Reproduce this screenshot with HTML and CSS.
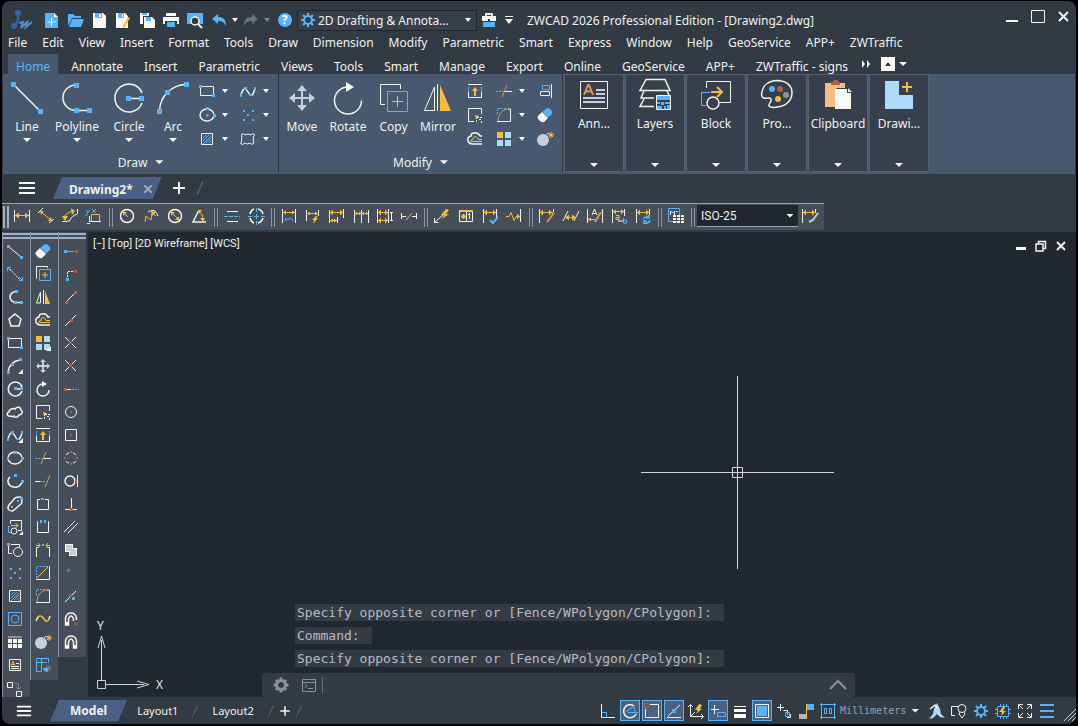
FILE: index.html
```html
<!DOCTYPE html>
<html lang="en">
<head>
  <meta charset="UTF-8">
  <meta name="viewport" content="width=device-width, initial-scale=1.0">
  <title>ZWCAD 2026 Professional Edition - [Drawing2.dwg]</title>
  <link rel="stylesheet" href="styles.css">
</head>
<body>
  <!-- Icon sprite -->
  <svg class="sprite" aria-hidden="true">
    <!-- quick access -->
    <symbol id="logo" viewBox="0 0 24 24"><path class="lg" d="M4 18Q9 14 8 6"/><circle class="lgf" cx="4" cy="18" r="3"/><circle class="lgf" cx="8" cy="5" r="3"/><path class="lg2" d="M9 15l4-1-2 6 7-7-2 6 6-5"/></symbol>
    <symbol id="new" viewBox="0 0 18 18"><path class="bf" d="M3 2h9l4 4v11H3z"/><path class="wf" d="M12 2l4 4h-4z"/><path class="w" d="M9.5 7v8M5.5 11h8"/></symbol>
    <symbol id="open" viewBox="0 0 18 18"><path class="bf" d="M2 3h5l2 2h6v2H6l-4 8z"/><path class="bf" d="M6 8h12l-3 8H3z"/></symbol>
    <symbol id="save" viewBox="0 0 18 18"><path class="wf" d="M3 2h10l3 3v12H3z"/><path class="bf" d="M5 2h7v5H5z"/><path class="wf" d="M9 3h2v3H9z"/></symbol>
    <symbol id="saveas" viewBox="0 0 18 18"><path class="wf" d="M2 2h9l3 3v12H2z"/><path class="bf" d="M4 2h6v5H4z"/><path class="wf" d="M8 3h1v3H8z"/><path class="yf" d="M14 6l2 1-5 9-2 1v-2z"/></symbol>
    <symbol id="saveall" viewBox="0 0 18 18"><path class="wf" d="M2 2h9v3H5v8H2z"/><path class="bf" d="M4 2h5v2H4z"/><path class="wf" d="M6 6h8l3 3v8H6z"/><path class="bf" d="M8 6h5v4H8z"/></symbol>
    <symbol id="print" viewBox="0 0 18 18"><path class="wf" d="M4 2h10v3H4zM1 6h16v7h-2v-3H3v3H1z"/><path class="bf" d="M5 11h8v5H5z"/></symbol>
    <symbol id="preview" viewBox="0 0 18 18"><path class="bf" d="M1 2h16v11H1z"/><circle class="lens" cx="9" cy="10" r="4"/><path class="w w2" d="M12 13l4 4"/></symbol>
    <symbol id="undo" viewBox="0 0 18 18"><path class="bf" d="M2 8l6-5v3c6 0 8 3 8 9-2-4-4-5-8-5v3z"/></symbol>
    <symbol id="redo" viewBox="0 0 18 18"><path class="gf" d="M16 8l-6-5v3c-6 0-8 3-8 9 2-4 4-5 8-5v3z"/></symbol>
    <symbol id="gear" viewBox="0 0 18 18"><circle class="b w2" cx="9" cy="9" r="4"/><path class="b w2" d="M9 2v3M9 13v3M2 9h3M13 9h3M4 4l2 2M12 12l2 2M14 4l-2 2M6 12l-2 2"/></symbol>
    <symbol id="case" viewBox="0 0 18 18"><path class="w w2" d="M6 5V3h6v2"/><path class="wf" d="M2 5h14v5H2z"/><path class="bf" d="M3 11h12v5H3z"/><path class="df" d="M8 8h2v3H8z"/></symbol>
    <symbol id="more" viewBox="0 0 18 18"><path class="wf" d="M5 5h8v1H5zM5 8h8l-4 5z"/></symbol>
    <symbol id="min" viewBox="0 0 18 18"><path class="wf" d="M3 12h12v2H3z"/></symbol>
    <symbol id="max" viewBox="0 0 18 18"><path class="w" d="M2.5 2.500h13v12h-13z"/></symbol>
    <symbol id="close" viewBox="0 0 18 18"><path class="w w2" d="M4 4l9 9M13 4l-9 9"/></symbol>

    <!-- draw -->
    <symbol id="line" viewBox="0 0 18 18"><path class="w" d="M2.5 4.500l13 11"/><path class="bf" d="M1 3h3v3H1zM14 14h3v3h-3z"/></symbol>
    <symbol id="xline" viewBox="0 0 18 18"><path class="w dash" d="M4 4l10 11"/><path class="b" d="M1.500 6V2.500H5M16.500 12v3.500H13M2 3l3 3M16 15l-3-3"/></symbol>
    <symbol id="pline" viewBox="0 0 18 18"><path class="w w15" d="M10 3.500a6 5.500 0 0 0 0 11h5"/><path class="bf" d="M9 2h3v3H9zM8 13h3v3H8zM14 13h3v3h-3z"/></symbol>
    <symbol id="polygon" viewBox="0 0 18 18"><path class="w w15" d="M9 3l6 5-2 7H5L3 8z"/></symbol>
    <symbol id="rect" viewBox="0 0 18 18"><path class="w" d="M2.500 4.500h13v9h-13z"/><path class="bf" d="M1 3h3v3H1zM14 12h3v3h-3z"/></symbol>
    <symbol id="arc" viewBox="0 0 18 18"><path class="w w15" d="M2 15C3 9 7 4 14 3"/><path class="bf" d="M1 14h3v3H1zM5 6h3v3H5zM13 1h3v3h-3z"/></symbol>
    <symbol id="circle" viewBox="0 0 18 18"><path class="w w15" d="M16 7A7 7 0 1 0 16 11M9 9h5"/><path class="bf" d="M8 7h3v3H8zM14 7h3v3h-3z"/></symbol>
    <symbol id="cloud" viewBox="0 0 18 18"><path class="w w15" d="M5 13c-4 1-5-3-2-4 0-3 4-4 6-3 2-3 6-2 6 1 3 2 0 5-2 5-2 3-4 3-5 1-1 1-2 1-3 0z"/></symbol>
    <symbol id="spline" viewBox="0 0 18 18"><path class="w w15" d="M2 13c2-8 5-7 7-3s5 6 7-4"/><path class="bf" d="M1 12h2v3H1zM5 5h3v3H5zM10 12h3v2h-3zM15 5h2v3h-2z"/></symbol>
    <symbol id="ellipse" viewBox="0 0 18 18"><ellipse class="w w15" cx="9" cy="9" rx="7" ry="6"/><path class="bf" d="M8 2h3v3H8zM15 8h3v3h-3zM1 8h2v3H1z"/></symbol>
    <symbol id="ellipsec" viewBox="0 0 18 18"><ellipse class="w w15" cx="9" cy="9" rx="7" ry="6"/><path class="bf" d="M8 1h3v3H8zM15 8h3v3h-3zM8 9h3v1H8zM9 8h1v3H9z"/></symbol>
    <symbol id="earc" viewBox="0 0 18 18"><path class="w w15" d="M4 5A7 6 0 1 0 16 9"/><path class="bf" d="M8 2h3v3H8zM15 8h3v3h-3z"/></symbol>
    <symbol id="capsule" viewBox="0 0 18 18"><path class="w w15" d="M3 10l6-7q2-1 5-1 2 0 2 3 0 3-1 4l-7 6q-2 2-5 0-2-2 0-5z"/><path class="bf" d="M5 11h2v2H5zM11 5h2v2h-2zM14 2h3v3h-3z"/></symbol>
    <symbol id="insert" viewBox="0 0 18 18"><path class="w" d="M4.500 6V2.500h11v10H12"/><path class="b" d="M4 8.500H2.500v6H5"/><circle class="w" cx="8" cy="13" r="3"/><path class="y" d="M5 7.500h7M9.500 5l2.500 2.500L9.500 10"/><path class="wf" d="M17 13v4h-4z"/></symbol>
    <symbol id="block" viewBox="0 0 18 18"><path class="w" d="M2.500 4v8.500H6M5 3.500h8.500V6"/><circle class="w" cx="12" cy="11" r="4.500"/><path class="bf" d="M1 2h3v3H1z"/></symbol>
    <symbol id="points" viewBox="0 0 18 18"><path class="bf" d="M4 4h2v2H4zM13 4h2v2h-2zM8 8h2v2H8zM4 13h2v2H4zM13 13h2v2h-2z"/></symbol>
    <symbol id="hatch" viewBox="0 0 18 18"><path class="w" d="M3.500 3.500h11v11h-11z"/><path class="b" d="M5 8l3-3M5 11l6-6M5 14l8-8M8 13l5-5M11 13l2-2"/></symbol>
    <symbol id="region" viewBox="0 0 18 18"><path class="b" d="M2.500 2.500h13v13h-13z"/><circle class="b" cx="9" cy="9" r="4"/></symbol>
    <symbol id="table" viewBox="0 0 18 18"><path class="olive" d="M2 3h14v2H2z"/><path class="wf" d="M2 6h4v4H2zM7 6h4v4H7zM12 6h4v4h-4zM2 11h4v4H2zM7 11h4v4H7zM12 11h4v4h-4z"/></symbol>
    <symbol id="mtext" viewBox="0 0 18 18"><path class="w" d="M3.500 3.500h11v11h-11z"/><path class="y" d="M5 9.500l2-4 2 4M5 8.500h4"/><path class="w" d="M10 7.500h3M5 10.500h8M5 12.500h8"/></symbol>
    <symbol id="next" viewBox="0 0 18 18"><path class="w" d="M1.500 3.500h5v5h-5zM10.500 12.500h5v5h-5z"/><path class="g" d="M9 4.500h3.500V10M10 8l2.500 2.500L15 8"/></symbol>
    <symbol id="wipeout" viewBox="0 0 18 18"><path class="w" d="M3 4q2-1 3 1 3-2 6 0 1-2 3-1 1 2-1 3 1 2 0 4 2 2 0 3-1 1-3-1-3 2-5 0-2 2-4 1-1-2 1-3-1-2 0-4-1-2 0-3z"/></symbol>
    <symbol id="corner" viewBox="0 0 18 18"><path class="wf" d="M17 12v5h-5z"/></symbol>

    <!-- modify -->
    <symbol id="erase" viewBox="0 0 18 18"><path class="wf" d="M6 6l6 6-4 4q-2 1-4-1l-2-2q-1-2 0-3z"/><path class="bf" d="M6.500 5.500L10 3q2-2 4 0l1 1q2 2 1 4l-4 3.500z"/></symbol>
    <symbol id="copy" viewBox="0 0 18 18"><path class="w" d="M3 13.500H2.500v-12h11V3"/><path class="b" d="M5.500 4.500h11v11h-11z"/><path class="y" d="M8 10h6M11 7v6"/></symbol>
    <symbol id="mirror" viewBox="0 0 18 18"><path class="w" d="M6.500 4v11H2.500zM9.500 2v14"/><path class="yf" d="M11 3l5 13h-5z"/></symbol>
    <symbol id="offset" viewBox="0 0 18 18"><path class="w w15" d="M16 6h-2q-2-4-6-3-3 0-3 3-4 1-3 5 1 3 5 3h9"/><path class="y" d="M16 9.500h-4q-1-3-3-3-2 0-2 3-3 0-2 2h11"/></symbol>
    <symbol id="array" viewBox="0 0 18 18"><path class="yf" d="M2 2h6v6H2z"/><path class="lbf" d="M10 2h6v6h-6zM2 10h6v6H2zM10 10h6v6h-6z"/></symbol>
    <symbol id="move" viewBox="0 0 18 18"><path class="sf" d="M9 2l3 3h-2v3h3V6l3 3-3 3v-2h-3v3h2l-3 3-3-3h2v-3H5v2L2 9l3-3v2h3V5H6z"/></symbol>
    <symbol id="rotate" viewBox="0 0 18 18"><path class="w w15" d="M9 4a6 6 0 1 0 6 6"/><path class="wf" d="M8 1l5 3-5 3z"/></symbol>
    <symbol id="scale" viewBox="0 0 18 18"><path class="w" d="M8 15.500H2.500v-13h13V8"/><path class="yf" d="M9 9l4 1-3 3z"/><path class="w dash" d="M11 11.500h5M10.500 16v-4M13 13.500h3M15.500 17v-3"/></symbol>
    <symbol id="stretch" viewBox="0 0 18 18"><path class="w" d="M2 2.500h14M2.500 10v6M15.500 10v6M2 15.500h14"/><path class="b dash" d="M2.500 5v6M15.500 5v6"/><path class="yf" d="M9 5l3 4h-2v5H8V9H6z"/></symbol>
    <symbol id="trim" viewBox="0 0 18 18"><path class="w" d="M9 9.500h8"/><path class="b dash" d="M1 9.500h7"/><path class="o" d="M7 15l5-12"/></symbol>
    <symbol id="extend" viewBox="0 0 18 18"><path class="w" d="M1 9.500h5"/><path class="b dash" d="M6 9.500h6"/><path class="o" d="M11 15l5-12"/></symbol>
    <symbol id="break1" viewBox="0 0 18 18"><path class="w" d="M6 4.500H3.500v10h11v-10H11"/><path class="bf" d="M7 3h3v2H7z"/></symbol>
    <symbol id="break2" viewBox="0 0 18 18"><path class="w" d="M4 3.500h-.5v11h11v-11H14"/><path class="bf" d="M6 2h2v3H6zM10 2h2v3h-2z"/></symbol>
    <symbol id="join" viewBox="0 0 18 18"><path class="w" d="M2.500 16V6.500H5M15.500 16V6.500H13"/><path class="y" d="M2 4.500h4M4 2l2 2.500L4 7M16 4.500h-4M14 2l-2 2.500L14 7"/><path class="bf" d="M8 3h2v2H8z"/></symbol>
    <symbol id="chamfer" viewBox="0 0 18 18"><path class="w" d="M2 15.500h13.500V2"/><path class="b dash" d="M2.500 14V2.500H14"/><path class="y" d="M3 14L14 3"/></symbol>
    <symbol id="fillet" viewBox="0 0 18 18"><path class="w" d="M2 15.500h13.500V3H13"/><path class="b dash" d="M2.500 8V2.500H12"/><path class="o" d="M3 15C3 8 7 4 13 3"/></symbol>
    <symbol id="blend" viewBox="0 0 18 18"><path class="y w15" d="M4 7c2-2 4-1 6 2s4 3 5 0"/><path class="w w15" d="M2 11l2-4M15 9l1-3"/></symbol>
    <symbol id="explode" viewBox="0 0 18 18"><circle class="sf" cx="7" cy="10" r="6"/><path class="s" d="M10 5l2-2 2 1"/><path class="y" d="M15 2v6M12 5h6M13 3l4 4M17 3l-4 4"/></symbol>
    <symbol id="props" viewBox="0 0 18 18"><path class="b" d="M2.500 2.500h12V7M2.500 2.500v13h5v-9M7.500 2.500v4h5M3 6.500h5"/><path class="gf" d="M11 11l5-2 1 4-3 3z"/><path class="bf" d="M9 12h5v4l-4-1z"/></symbol>
    <symbol id="align" viewBox="0 0 18 18"><path class="w" d="M15.500 2v14M4.500 9.500h9v4h-9z"/><path class="b" d="M6.500 3.500h7v4h-7z"/></symbol>

    <!-- object snap -->
    <symbol id="track" viewBox="0 0 18 18"><path class="b" d="M3 9.500h9"/><path class="bf" d="M2 8h3v3H2z"/><path class="rf" d="M13 8h3v3h-3z"/></symbol>
    <symbol id="from" viewBox="0 0 18 18"><path class="w dash" d="M5.500 12V6.500H12"/><path class="rf" d="M12 5h3v3h-3z"/><path class="bf" d="M4 13h3v3H4z"/></symbol>
    <symbol id="end" viewBox="0 0 18 18"><path class="w" d="M4 14L14 4"/><path class="rf" d="M3 13h3v3H3zM12 3h3v3h-3z"/></symbol>
    <symbol id="mid" viewBox="0 0 18 18"><path class="w" d="M3 15L14 4"/><path class="rf" d="M8 8h3v3H8z"/></symbol>
    <symbol id="int" viewBox="0 0 18 18"><path class="w" d="M3 3l11 11M14 3L3 14"/><path class="rf" d="M7 7h3v3H7z"/></symbol>
    <symbol id="ext" viewBox="0 0 18 18"><path class="w" d="M4 9.500h5"/><path class="b dash" d="M10 9.500h7"/><path class="rf" d="M2 8h3v3H2z"/></symbol>
    <symbol id="cen" viewBox="0 0 18 18"><circle class="w" cx="9" cy="9" r="5.500"/><path class="rf" d="M8 8h2v2H8z"/></symbol>
    <symbol id="geo" viewBox="0 0 18 18"><path class="w" d="M3.500 3.500h11v11h-11z"/><path class="rf" d="M8 8h2v2H8z"/></symbol>
    <symbol id="quad" viewBox="0 0 18 18"><path class="w" d="M4 6q1-2 3-2M11 4q2 0 3 2M14 12q-1 2-3 2M7 14q-2 0-3-2"/><path class="rf" d="M8 2h2v2H8zM8 14h2v2H8zM2 8h2v2H2zM14 8h2v2h-2z"/></symbol>
    <symbol id="tan" viewBox="0 0 18 18"><circle class="w w15" cx="8" cy="9" r="5"/><path class="w" d="M15.500 3v12"/><path class="rf" d="M13 8h2v3h-2z"/></symbol>
    <symbol id="perp" viewBox="0 0 18 18"><path class="w" d="M9.500 3v11M3 14.500h12"/><path class="rf" d="M8 13h3v3H8z"/></symbol>
    <symbol id="par" viewBox="0 0 18 18"><path class="w" d="M2 14L13 3M6 15L16 5"/></symbol>
    <symbol id="ins" viewBox="0 0 18 18"><path class="wf" d="M3 3h8v4h4v8H7v-4H3z"/><path class="sf" d="M4 4h6v6H4zM8 8h6v6H8z"/></symbol>
    <symbol id="node" viewBox="0 0 18 18"><path class="rf" d="M5 5h3v3H5z"/></symbol>
    <symbol id="near" viewBox="0 0 18 18"><path class="w" d="M3 15L14 4"/><path class="rf" d="M7 7h3v3H7z"/><path class="bf" d="M10 10h3v3h-3z"/></symbol>
    <symbol id="magnet" viewBox="0 0 18 18"><path class="w w15" d="M3.500 15V8q1-5 5.500-5t5.500 5v7h-3V9q-1-3-2.500-3T6.500 9v6z"/><path class="wf" d="M3 12h4v3H3zM11 12h4v3h-4z"/></symbol>
    <symbol id="nosnap" viewBox="0 0 18 18"><path class="w w15" d="M14.500 10V8q-1-5-5.500-5T3.500 8v7h3V9q1-3 2.500-3t2.500 3v2"/><path class="wf" d="M3 12h4v3H3z"/><path class="r" d="M12 12l4 4M16 12l-4 4"/></symbol>

    <!-- dimension -->
    <symbol id="d-lin" viewBox="0 0 18 18"><path class="w" d="M1.500 3v12M16.500 3v12"/><path class="y" d="M2 8.500h14"/><path class="yf" d="M2 8.500l4-3v6zM16 8.500l-4-3v6z"/></symbol>
    <symbol id="d-ali" viewBox="0 0 18 18"><path class="w" d="M1 6l5-5M12 16l5-4"/><path class="y" d="M4 5l10 8"/><path class="yf" d="M3 4h4L4 8zM15 14h-4l3-4z"/></symbol>
    <symbol id="d-arc" viewBox="0 0 18 18"><path class="w" d="M16.500 2v5Q10 9 8.500 14H6M1 14.500h5"/><path class="y" d="M3 12Q4 5 13 4"/><path class="yf" d="M10 1l4 3-3 4zM1 9h6l-3 5z"/></symbol>
    <symbol id="d-ord" viewBox="0 0 18 18"><path class="w" d="M4.500 9v5.500H16M5 16.500H2"/><path class="y" d="M6.500 14V7.500h8V14"/><path class="b" d="M1 3l2 2 2-2M3 5l-2 4M7 2l4 4M11 2L7 6"/></symbol>
    <symbol id="d-rad" viewBox="0 0 18 18"><circle class="w w15" cx="9" cy="9" r="6.500"/><path class="y" d="M6 6l4 4"/><path class="yf" d="M5 5h4L5 9z"/></symbol>
    <symbol id="d-jog" viewBox="0 0 18 18"><path class="w" d="M6 5q7-5 10 4"/><path class="y" d="M3 15l1-6 5 4 1-7 4 3"/><path class="yf" d="M9 4l5 1-4 4z"/></symbol>
    <symbol id="d-dia" viewBox="0 0 18 18"><circle class="w w15" cx="9" cy="9" r="6.500"/><path class="y" d="M6 6l6 6"/><path class="yf" d="M5 5h4L5 9zM13 13H9l4-4z"/></symbol>
    <symbol id="d-ang" viewBox="0 0 18 18"><path class="w w15" d="M9 3L3 15h13"/><path class="y" d="M9 4q4 3 4 9"/><path class="yf" d="M8 3h4L9 7zM10 11h5l-2 4z"/></symbol>
    <symbol id="d-break" viewBox="0 0 18 18"><path class="w" d="M4 4.500h11M4 14.500h11"/><path class="b dash2" d="M1 9.500h16"/></symbol>
    <symbol id="d-cen" viewBox="0 0 18 18"><path class="w w15" d="M3 7q1-4 4-5M11 2q4 1 5 5M16 11q-1 4-5 5M7 16q-3-1-4-5"/><path class="b" d="M9.500 1v4M9.500 7v5M9.500 14v4M1 9.500h4M7 9.500h5M14 9.500h4"/></symbol>
    <symbol id="d-quick" viewBox="0 0 18 18"><path class="w" d="M2.500 2v14M15.500 2v14"/><path class="y" d="M3 5.500h12"/><path class="yf" d="M3 5.500l3-2v4zM15 5.500l-3-2v4z"/><path class="b" d="M5 14l1-3 2 2 2-2 2 1 1 2"/></symbol>
    <symbol id="d-flash" viewBox="0 0 18 18"><path class="w" d="M2.500 3v11M14.500 3v6"/><path class="y" d="M3 6.500h12"/><path class="yf" d="M3 6.500l3-2v4zM14 6.500l-3-2v4zM12 9l-4 4h2l-1 4 5-6h-2l2-2z"/></symbol>
    <symbol id="d-base" viewBox="0 0 18 18"><path class="w" d="M1.500 3v13M15.500 2v9M9.500 10v6"/><path class="y" d="M2 5.500h13M2 13.500h7"/><path class="yf" d="M2 5.500l3-3v6zM15 5.500l-3-3v6zM2 13.500l3-2v4zM9 13.500l-3-2v4z"/></symbol>
    <symbol id="d-cont" viewBox="0 0 18 18"><path class="w" d="M2.500 3v13M9.500 3v13M16.500 3v13"/><path class="y" d="M3 6.500h13"/><path class="yf" d="M3 6.500l2-2v4zM9 6.500l-2-2v4zM10 6.500l2-2v4zM16 6.500l-2-2v4z"/></symbol>
    <symbol id="d-space" viewBox="0 0 18 18"><path class="w" d="M1.500 2v14M12.500 2v14M14 5.500h3M14 13.500h3M15.500 6v7"/><path class="y" d="M2 5.500h10M2 13.500h10"/><path class="yf" d="M2 5.500l3-3v6zM12 5.500l-3-3v6zM2 13.500l3-3v6zM12 13.500l-3-3v6z"/></symbol>
    <symbol id="d-cut" viewBox="0 0 18 18"><path class="w" d="M1.500 6v6M16.500 6v6M2 9.500h4M12 9.500h4"/><path class="y" d="M6 13l6-7"/></symbol>
    <symbol id="d-lead" viewBox="0 0 18 18"><path class="w" d="M2 15l8-7M1.500 11v4.500h4"/><path class="yf" d="M13 2L8 8h3l-2 4 7-5h-3l3-4z"/></symbol>
    <symbol id="d-tol" viewBox="0 0 18 18"><path class="w" d="M2.500 3.500h13v11h-13zM9.500 4v10M12.500 6v6M11 7.500h1"/><path class="y w2" d="M3 4h13M4 9.500h5M6.500 7v5"/></symbol>
    <symbol id="d-insp" viewBox="0 0 18 18"><path class="w" d="M2.500 2v14M15.500 2v9"/><path class="y" d="M3 5.500h12"/><path class="yf" d="M3 5.500l3-3v6zM15 5.500l-3-3v6z"/><path class="b w2" d="M9 13l3 3 5-6"/></symbol>
    <symbol id="d-jogl" viewBox="0 0 18 18"><path class="w" d="M15.500 2v13"/><path class="y" d="M1 9.500h3l2-4 3 8 2-4h4"/><path class="yf" d="M15 9.500l-3-3v6z"/></symbol>
    <symbol id="d-edit" viewBox="0 0 18 18"><path class="w" d="M1.500 2v14M15.500 2v3"/><path class="y" d="M2 5.500h13"/><path class="yf" d="M2 5.500l3-3v6zM14 5.500l-3-3v6z"/><path class="o w2" d="M16 6l-7 9"/></symbol>
    <symbol id="d-obl" viewBox="0 0 18 18"><path class="w" d="M1 14L6 4M12 14l5-10"/><path class="y" d="M4 10.500h10"/><path class="yf" d="M3 10.500l4-3v6zM14 10.500l-4-3v6z"/></symbol>
    <symbol id="d-txt" viewBox="0 0 18 18"><path class="w" d="M1.500 2v14M16.500 2v14M6 8l2.500-6L11 8M7 6.500h3"/><path class="y" d="M2 12.500h7"/><path class="yf" d="M2 12.500l3-2v4z"/><path class="o w2" d="M15 5l-6 10"/></symbol>
    <symbol id="d-repl" viewBox="0 0 18 18"><path class="w" d="M2.500 2v14M14.500 2v7M8 14h5"/><path class="y" d="M3 4.500h11M6 8.500h3v4H6v-2h3"/><path class="yf" d="M3 4.500l3-2v5zM14 4.500l-3-2v5z"/><path class="b" d="M13.500 11v5h3v-3h-3"/></symbol>
    <symbol id="d-upd" viewBox="0 0 18 18"><path class="w" d="M2.500 2v14M15.500 2v6"/><path class="y" d="M3 5.500h12"/><path class="yf" d="M3 5.500l3-3v6zM15 5.500l-3-3v6z"/><path class="b w15" d="M9 12q2-3 6-2M16 13q-1 4-6 3M15 8v3h-3M10 17v-3h3"/></symbol>
    <symbol id="d-style" viewBox="0 0 18 18"><path class="b" d="M1.500 1.500h11v13h-11z"/><path class="w" d="M3.500 8V4l2 2 2-2v4M9 4.500h2"/><path class="wf" d="M6 8h3v2H6zM10 8h3v2h-3zM14 8h3v2h-3zM6 11h3v2H6zM10 11h3v2h-3zM14 11h3v2h-3zM6 14h3v2H6zM10 14h3v2h-3zM14 14h3v2h-3z"/></symbol>
    <symbol id="d-brush" viewBox="0 0 18 18"><path class="w" d="M1.500 2v14M14.500 2v4"/><path class="y" d="M2 5.500h13"/><path class="yf" d="M2 5.500l3-3v6zM14 5.500l-3-3v6z"/><path class="s w2" d="M17 6l-5 7-4 2"/></symbol>

    <!-- large ribbon icons -->
    <symbol id="l-line" viewBox="0 0 36 36"><path class="w w15" d="M4.500 4.500l27 27"/><path class="bf" d="M2 2h5v5H2zM29 29h5v5h-5z"/></symbol>
    <symbol id="l-pline" viewBox="0 0 36 36"><path class="w w15" d="M17 5a13 12.700 0 0 0 0 25.500h13"/><path class="bf" d="M15 3h5v5h-5zM15 28h5v5h-5zM28 28h5v5h-5z"/></symbol>
    <symbol id="l-circle" viewBox="0 0 36 36"><path class="w w15" d="M31 13a14 14 0 1 0 0 10M18 18.500h12"/><path class="bf" d="M15 16h5v5h-5zM28 16h5v5h-5z"/></symbol>
    <symbol id="l-arc" viewBox="0 0 36 36"><path class="w w15" d="M4.500 31A27 27 0 0 1 31 4.500"/><path class="bf" d="M2 29h5v5H2zM10 10h5v5h-5zM29 2h5v5h-5z"/></symbol>
    <symbol id="l-move" viewBox="0 0 36 36"><path class="sf" d="M18 5l5 6h-4v6h6v-4l6 5-6 5v-4h-6v6h4l-5 6-5-6h4v-6h-6v4l-6-5 6-5v4h6v-6h-4z"/></symbol>
    <symbol id="l-rotate" viewBox="0 0 36 36"><path class="w w15" d="M18 7a13.500 13.500 0 1 0 13.500 13.500"/><path class="wf" d="M16 2l8 5-8 5z"/></symbol>
    <symbol id="l-copy" viewBox="0 0 36 36"><path class="w" d="M9 24.500H4.500v-20h20V9"/><path class="b" d="M11.500 11.500h20v20h-20z"/><path class="y" d="M16 21.500h11M21.500 16v11"/></symbol>
    <symbol id="l-mirror" viewBox="0 0 36 36"><path class="w" d="M14.500 7v23.500H4.500zM17.500 4v27"/><path class="yf" d="M20 5l11 26H20z"/></symbol>
    <symbol id="l-ann" viewBox="0 0 36 36"><path class="w" d="M4.500 4.500h27v27h-27z"/><path class="o w2" d="M8 18l4-10h1l4 10M9 14.500h7"/><path class="sf" d="M20 12h9v2h-9zM20 16h9v2h-9zM7 20h22v2H7zM7 24h22v2H7z"/></symbol>
    <symbol id="l-layers" viewBox="0 0 36 36"><path class="w w15" d="M9 2.500h19l5 11H3zM7 14l-3 7h13M7 22l-4 7.500h14M30 14l2 4"/><path class="bf" d="M20 18h13v5H20zM20 25h3v2h-3zM24 25h3v3h-3zM28 25h5v2h-5zM20 29h5v3h-5zM27 29h2v3h-2zM30 28h3v4h-3z"/><path class="w" d="M19.500 18.500h14v14h-14z"/></symbol>
    <symbol id="l-block" viewBox="0 0 36 36"><path class="w" d="M8.500 11V4.500h24v21H21"/><path class="b" d="M12 15.500H3.500v13H8"/><circle class="w w15" cx="15" cy="26" r="6"/><path class="y w2" d="M13 15h10M19 10l5 5-5 5"/></symbol>
    <symbol id="l-palette" viewBox="0 0 36 36"><path class="w w15" d="M18 3.500c9 0 15 5 15 12 0 8-6 14-15 14.500-4 1-7 0-8-1-1-2 3-4 2-7-1-2-5 0-7-1-2 0-3-3-2-6 1-7 7-11 15-11.500z"/><circle class="bf" cx="13" cy="12" r="3"/><circle class="rf" cx="21" cy="12" r="3"/><circle class="olive" cx="27" cy="18" r="3"/><circle class="yf" cx="19" cy="22" r="3"/></symbol>
    <symbol id="l-clip" viewBox="0 0 36 36"><path class="of" d="M5 6h20v5h-8l-2 2v17H5z"/><path class="rf" d="M11 8V5h2V3h5v2h2v3z"/><path class="wf" d="M15 12h12v4h4v16H15zM28 11l4 4h-4z"/></symbol>
    <symbol id="l-draw" viewBox="0 0 36 36"><path class="lbf" d="M4 4h14v14h14v14H4z"/><path class="y w2" d="M21 10h10M26 5v10"/></symbol>

    <!-- status bar -->
    <symbol id="s-ortho" viewBox="0 0 18 18"><path class="w" d="M2.500 2v13.500H16"/><path class="b" d="M3 10.500h4.500V15"/></symbol>
    <symbol id="s-polar" viewBox="0 0 18 18"><path class="w w15" d="M13 4A6.500 6.500 0 1 0 15 12"/><path class="b" d="M5 9.500l9-6M7 10.500h10M12 5q3 2 2 5"/></symbol>
    <symbol id="s-snap" viewBox="0 0 18 18"><path class="w" d="M7 2.500h8.500v13h-13V7"/><path class="r" d="M1.500 1.500h4v4h-4z"/></symbol>
    <symbol id="s-otrack" viewBox="0 0 18 18"><path class="w" d="M2 15.500h14M3 14L15 3"/><path class="b" d="M7.500 7.500h3v3h-3z"/></symbol>
    <symbol id="s-ucs" viewBox="0 0 18 18"><path class="w" d="M3.500 3v11.500H16M1 5l2.500-2.500L6 5M14 12l2.500 2.500L14 17M4 14l4-4"/><path class="yf" d="M12 2L8 8h3l-2 4 6-5h-2l2-4z"/></symbol>
    <symbol id="s-dyn" viewBox="0 0 18 18"><path class="w" d="M2 7.500h8M5.500 3v9"/><path class="b" d="M8.500 10.500h8v4h-8z"/></symbol>
    <symbol id="s-lwt" viewBox="0 0 18 18"><path class="wf" d="M3 4h12v1H3zM3 7h12v3H3zM3 12h12v4H3z"/></symbol>
    <symbol id="s-transp" viewBox="0 0 18 18"><path class="w" d="M2.500 2.500h13v13h-13z"/><path class="bf" d="M4 4h10v10H4z"/></symbol>
    <symbol id="s-cycle" viewBox="0 0 18 18"><path class="w" d="M2 5.500h7M5.500 2v7M8.500 8.500h4v4"/><path class="b" d="M10.500 10.500h4v4h-4z"/><path class="w" d="M12 15.500h3.500V12"/></symbol>
    <symbol id="s-anno" viewBox="0 0 18 18"><path class="bf" d="M10 2h7v6h-7z"/><path class="gf2" d="M2 12h7v5H2z"/><path class="y" d="M9.500 2v15"/></symbol>
    <symbol id="s-units" viewBox="0 0 18 18"><path class="b" d="M2.500 1v16M15.500 1v16M1 2.500h16M1 15.500h16M5.500 6.500h2v5h-2zM10.500 6.500h2v5h-2z"/></symbol>
    <symbol id="s-ws" viewBox="0 0 18 18"><path class="lbf" d="M6 7l3-6 3 6 1 5 4 4-5-1-3-3-4 4-4 1 4-5z"/><path class="w w15" d="M2 7l5-4 2 3"/></symbol>
    <symbol id="s-iso" viewBox="0 0 18 18"><path class="w" d="M5 13.500H1.500v-9H8M10 10l-1 2 3 4 3-4-1-2"/><circle class="w" cx="12" cy="6.500" r="4"/></symbol>
    <symbol id="s-hw" viewBox="0 0 18 18"><path class="b" d="M3.500 4.500h11v10h-11zM6.500 2v2M9.500 2v2M12.500 2v2M6.500 15v2M9.500 15v2M12.500 15v2M1 7.500h2M1 11.500h2M15 7.500h2M15 11.500h2"/><path class="yf" d="M9 5L5 10h3l-1 4 5-5H9l2-4z"/></symbol>
    <symbol id="s-full" viewBox="0 0 18 18"><path class="w" d="M2.500 7V2.500H7M11 2.500h4.500V7M15.500 11v4.500H11M7 15.500H2.500V11M3 3l4 4M15 3l-4 4M15 15l-4-4M3 15l4-4"/></symbol>
    <symbol id="s-menu" viewBox="0 0 18 18"><path class="bf" d="M2 2h14v2H2zM2 8h14v2H2zM2 14h14v2H2z"/></symbol>
    <symbol id="burger" viewBox="0 0 18 18"><path class="wf" d="M1 3h16v2H1zM1 8h16v2H1zM1 13h16v2H1z"/></symbol>
    <symbol id="plus" viewBox="0 0 18 18"><path class="w w2" d="M9 3v12M3 9h12"/></symbol>
    <symbol id="slash" viewBox="0 0 18 18"><path class="s dim" d="M6 16l6-14"/></symbol>
  </svg>

  <div class="window">
    <header class="titlebar">
      <svg class="logo"><use href="#logo"/></svg>
      <button class="tool" title="New"><svg><use href="#new"/></svg></button>
      <button class="tool" title="Open"><svg><use href="#open"/></svg></button>
      <button class="tool" title="Save"><svg><use href="#save"/></svg></button>
      <button class="tool" title="Save As"><svg><use href="#saveas"/></svg></button>
      <button class="tool" title="Save All"><svg><use href="#saveall"/></svg></button>
      <button class="tool" title="Plot"><svg><use href="#print"/></svg></button>
      <button class="tool" title="Preview"><svg><use href="#preview"/></svg></button>
      <button class="tool" title="Undo"><svg><use href="#undo"/></svg></button>
      <button class="drop" title="Undo list"></button>
      <button class="tool" title="Redo"><svg><use href="#redo"/></svg></button>
      <button class="drop off" title="Redo list"></button>
      <button class="tool" title="Help"><span class="help">?</span></button>
      <label class="workspace">
        <svg><use href="#gear"/></svg>
        <select aria-label="Workspace"><option>2D Drafting &amp; Annota...</option><option>ZWCAD Classic</option></select>
      </label>
      <button class="tool" title="Toolbox"><svg><use href="#case"/></svg></button>
      <button class="tool narrow" title="Customize"><svg><use href="#more"/></svg></button>
      <h1>ZWCAD 2026 Professional Edition - [Drawing2.dwg]</h1>
      <div class="winctl">
        <button class="tool" title="Minimize"><svg><use href="#min"/></svg></button>
        <button class="tool" title="Maximize"><svg><use href="#max"/></svg></button>
        <button class="tool" title="Close"><svg><use href="#close"/></svg></button>
      </div>
    </header>

    <nav class="menubar">
      <button>File</button><button>Edit</button><button>View</button><button>Insert</button><button>Format</button><button>Tools</button><button>Draw</button><button>Dimension</button><button>Modify</button><button>Parametric</button><button>Smart</button><button>Express</button><button>Window</button><button>Help</button><button>GeoService</button><button>APP+</button><button>ZWTraffic</button>
    </nav>

    <nav class="tabs">
      <button class="active">Home</button><button>Annotate</button><button>Insert</button><button>Parametric</button><button>Views</button><button>Tools</button><button>Smart</button><button>Manage</button><button>Export</button><button>Online</button><button>GeoService</button><button>APP+</button><button>ZWTraffic - signs</button>
      <span class="tabs-end">
        <svg class="chev" viewBox="0 0 10 8"><path class="wf" d="M1 0l3 4-3 4zM6 0l3 4-3 4z"/></svg>
        <svg class="upbox" viewBox="0 0 14 14"><path class="wf" d="M0 0h14v14H0z"/><path class="df" d="M4 9h6L7 5z"/></svg>
        <button class="drop" title="Ribbon display"></button>
      </span>
    </nav>

    <section class="ribbon">
      <div class="panel">
        <div class="panel-body draw">
          <button class="big"><svg><use href="#l-line"/></svg>Line<i class="tri"></i></button>
          <button class="big"><svg><use href="#l-pline"/></svg>Polyline<i class="tri"></i></button>
          <button class="big"><svg><use href="#l-circle"/></svg>Circle<i class="tri"></i></button>
          <button class="big"><svg><use href="#l-arc"/></svg>Arc<i class="tri"></i></button>
          <div class="smalls">
            <button class="tool" title="Rectangle"><svg><use href="#rect"/></svg></button><button class="drop" title="Rectangle list"></button>
            <button class="tool" title="Ellipse"><svg><use href="#ellipsec"/></svg></button><button class="drop" title="Ellipse list"></button>
            <button class="tool" title="Hatch"><svg><use href="#hatch"/></svg></button><button class="drop" title="Hatch list"></button>
          </div>
          <div class="smalls">
            <button class="tool" title="Spline"><svg><use href="#spline"/></svg></button><button class="drop" title="Spline list"></button>
            <button class="tool" title="Point"><svg><use href="#points"/></svg></button><button class="drop" title="Point list"></button>
            <button class="tool" title="Wipeout"><svg><use href="#wipeout"/></svg></button><button class="drop" title="Wipeout list"></button>
          </div>
        </div>
        <button class="panel-title">Draw<i class="tri"></i></button>
      </div>
      <div class="panel">
        <div class="panel-body modify">
          <button class="big"><svg><use href="#l-move"/></svg>Move</button>
          <button class="big"><svg><use href="#l-rotate"/></svg>Rotate</button>
          <button class="big"><svg><use href="#l-copy"/></svg>Copy</button>
          <button class="big"><svg><use href="#l-mirror"/></svg>Mirror</button>
          <div class="smalls single">
            <button class="tool" title="Stretch"><svg><use href="#stretch"/></svg></button>
            <button class="tool" title="Scale"><svg><use href="#scale"/></svg></button>
            <button class="tool" title="Offset"><svg><use href="#offset"/></svg></button>
          </div>
          <div class="smalls">
            <button class="tool" title="Trim"><svg><use href="#trim"/></svg></button><button class="drop" title="Trim list"></button>
            <button class="tool" title="Fillet"><svg><use href="#fillet"/></svg></button><button class="drop" title="Fillet list"></button>
            <button class="tool" title="Array"><svg><use href="#array"/></svg></button><button class="drop" title="Array list"></button>
          </div>
          <div class="smalls single">
            <button class="tool" title="Align"><svg><use href="#align"/></svg></button>
            <button class="tool" title="Erase"><svg><use href="#erase"/></svg></button>
            <button class="tool" title="Explode"><svg><use href="#explode"/></svg></button>
          </div>
        </div>
        <button class="panel-title">Modify<i class="tri"></i></button>
      </div>
      <button class="folded"><svg><use href="#l-ann"/></svg>Ann...<i class="tri"></i></button>
      <button class="folded"><svg><use href="#l-layers"/></svg>Layers<i class="tri"></i></button>
      <button class="folded"><svg><use href="#l-block"/></svg>Block<i class="tri"></i></button>
      <button class="folded"><svg><use href="#l-palette"/></svg>Pro...<i class="tri"></i></button>
      <button class="folded"><svg><use href="#l-clip"/></svg>Clipboard<i class="tri"></i></button>
      <button class="folded"><svg><use href="#l-draw"/></svg>Drawi...<i class="tri"></i></button>
    </section>

    <div class="filetabs">
      <button class="tool burger" title="Files"><svg><use href="#burger"/></svg></button>
      <div class="filetab">Drawing2*<button class="x" title="Close drawing"><svg viewBox="0 0 8 8"><path class="s w2" d="M0 0l8 8M8 0L0 8"/></svg></button></div>
      <button class="tool" title="New drawing"><svg><use href="#plus"/></svg></button>
      <svg><use href="#slash"/></svg>
    </div>

    <div class="dimbar">
      <i class="grip"></i>
      <button class="tool" title="Linear"><svg><use href="#d-lin"/></svg></button>
      <button class="tool" title="Aligned"><svg><use href="#d-ali"/></svg></button>
      <button class="tool" title="Arc Length"><svg><use href="#d-arc"/></svg></button>
      <button class="tool" title="Ordinate"><svg><use href="#d-ord"/></svg></button>
      <i class="sep"></i>
      <button class="tool" title="Radius"><svg><use href="#d-rad"/></svg></button>
      <button class="tool" title="Jogged"><svg><use href="#d-jog"/></svg></button>
      <button class="tool" title="Diameter"><svg><use href="#d-dia"/></svg></button>
      <button class="tool" title="Angular"><svg><use href="#d-ang"/></svg></button>
      <i class="sep"></i>
      <button class="tool" title="Centerline"><svg><use href="#d-break"/></svg></button>
      <button class="tool" title="Center Mark"><svg><use href="#d-cen"/></svg></button>
      <i class="sep"></i>
      <button class="tool" title="Smart Dimension"><svg><use href="#d-quick"/></svg></button>
      <button class="tool" title="Quick Dimension"><svg><use href="#d-flash"/></svg></button>
      <button class="tool" title="Baseline"><svg><use href="#d-base"/></svg></button>
      <button class="tool" title="Continue"><svg><use href="#d-cont"/></svg></button>
      <button class="tool" title="Dimension Space"><svg><use href="#d-space"/></svg></button>
      <button class="tool" title="Dimension Break"><svg><use href="#d-cut"/></svg></button>
      <i class="sep"></i>
      <button class="tool" title="Quick Leader"><svg><use href="#d-lead"/></svg></button>
      <button class="tool" title="Tolerance"><svg><use href="#d-tol"/></svg></button>
      <button class="tool" title="Inspection"><svg><use href="#d-insp"/></svg></button>
      <button class="tool" title="Jogged Linear"><svg><use href="#d-jogl"/></svg></button>
      <i class="sep"></i>
      <button class="tool" title="Dimension Edit"><svg><use href="#d-edit"/></svg></button>
      <button class="tool" title="Oblique"><svg><use href="#d-obl"/></svg></button>
      <button class="tool" title="Text Edit"><svg><use href="#d-txt"/></svg></button>
      <button class="tool" title="Override"><svg><use href="#d-repl"/></svg></button>
      <button class="tool" title="Update"><svg><use href="#d-upd"/></svg></button>
      <i class="sep"></i>
      <button class="tool" title="Style Table"><svg><use href="#d-style"/></svg></button>
      <i class="sep"></i>
      <label class="dimstyle"><select aria-label="Dimension style"><option>ISO-25</option><option>Standard</option></select></label>
      <button class="tool" title="Dimension Style"><svg><use href="#d-brush"/></svg></button>
    </div>

    <main class="work">
      <div class="palette">
        <button class="tool" title="Line"><svg><use href="#line"/></svg></button>
        <button class="tool" title="Construction Line"><svg><use href="#xline"/></svg></button>
        <button class="tool" title="Polyline"><svg><use href="#pline"/></svg></button>
        <button class="tool" title="Polygon"><svg><use href="#polygon"/></svg></button>
        <button class="tool" title="Rectangle"><svg><use href="#rect"/></svg></button>
        <button class="tool" title="Arc"><svg><use href="#arc"/><use href="#corner"/></svg></button>
        <button class="tool" title="Circle"><svg><use href="#circle"/></svg></button>
        <button class="tool" title="Revision Cloud"><svg><use href="#cloud"/></svg></button>
        <button class="tool" title="Spline"><svg><use href="#spline"/><use href="#corner"/></svg></button>
        <button class="tool" title="Ellipse"><svg><use href="#ellipse"/></svg></button>
        <button class="tool" title="Ellipse Arc"><svg><use href="#earc"/></svg></button>
        <button class="tool" title="Slot"><svg><use href="#capsule"/></svg></button>
        <button class="tool" title="Insert Block"><svg><use href="#insert"/></svg></button>
        <button class="tool" title="Make Block"><svg><use href="#block"/></svg></button>
        <button class="tool" title="Point"><svg><use href="#points"/></svg></button>
        <button class="tool" title="Hatch"><svg><use href="#hatch"/></svg></button>
        <button class="tool" title="Region"><svg><use href="#region"/></svg></button>
        <button class="tool" title="Table"><svg><use href="#table"/></svg></button>
        <button class="tool" title="Multiline Text"><svg><use href="#mtext"/></svg></button>
        <button class="tool" title="Add Selected"><svg><use href="#next"/></svg></button>
      </div>
      <div class="palette short">
        <button class="tool" title="Erase"><svg><use href="#erase"/></svg></button>
        <button class="tool" title="Copy"><svg><use href="#copy"/></svg></button>
        <button class="tool" title="Mirror"><svg><use href="#mirror"/></svg></button>
        <button class="tool" title="Offset"><svg><use href="#offset"/></svg></button>
        <button class="tool" title="Array"><svg><use href="#array"/><use href="#corner"/></svg></button>
        <button class="tool" title="Move"><svg><use href="#move"/></svg></button>
        <button class="tool" title="Rotate"><svg><use href="#rotate"/></svg></button>
        <button class="tool" title="Scale"><svg><use href="#scale"/></svg></button>
        <button class="tool" title="Stretch"><svg><use href="#stretch"/></svg></button>
        <button class="tool" title="Trim"><svg><use href="#trim"/></svg></button>
        <button class="tool" title="Extend"><svg><use href="#extend"/></svg></button>
        <button class="tool" title="Break at Point"><svg><use href="#break1"/></svg></button>
        <button class="tool" title="Break"><svg><use href="#break2"/></svg></button>
        <button class="tool" title="Join"><svg><use href="#join"/></svg></button>
        <button class="tool" title="Chamfer"><svg><use href="#chamfer"/></svg></button>
        <button class="tool" title="Fillet"><svg><use href="#fillet"/></svg></button>
        <button class="tool" title="Blend Curves"><svg><use href="#blend"/></svg></button>
        <button class="tool" title="Explode"><svg><use href="#explode"/></svg></button>
        <button class="tool" title="Match Properties"><svg><use href="#props"/></svg></button>
      </div>
      <div class="palette short">
        <button class="tool" title="Tracking"><svg><use href="#track"/></svg></button>
        <button class="tool" title="From"><svg><use href="#from"/></svg></button>
        <button class="tool" title="Endpoint"><svg><use href="#end"/></svg></button>
        <button class="tool" title="Midpoint"><svg><use href="#mid"/></svg></button>
        <button class="tool" title="Intersection"><svg><use href="#int"/></svg></button>
        <button class="tool" title="Apparent Intersection"><svg><use href="#int"/></svg></button>
        <button class="tool" title="Extension"><svg><use href="#ext"/></svg></button>
        <button class="tool" title="Center"><svg><use href="#cen"/></svg></button>
        <button class="tool" title="Geometric Center"><svg><use href="#geo"/></svg></button>
        <button class="tool" title="Quadrant"><svg><use href="#quad"/></svg></button>
        <button class="tool" title="Tangent"><svg><use href="#tan"/></svg></button>
        <button class="tool" title="Perpendicular"><svg><use href="#perp"/></svg></button>
        <button class="tool" title="Parallel"><svg><use href="#par"/></svg></button>
        <button class="tool" title="Insertion"><svg><use href="#ins"/></svg></button>
        <button class="tool" title="Node"><svg><use href="#node"/></svg></button>
        <button class="tool" title="Nearest"><svg><use href="#near"/></svg></button>
        <button class="tool" title="No Snap"><svg><use href="#nosnap"/></svg></button>
        <button class="tool" title="Snap Settings"><svg><use href="#magnet"/></svg></button>
      </div>

      <section class="viewport">
        <div class="view-head">
          <span>[−] [Top] [2D Wireframe] [WCS]</span>
          <svg class="view-ctl" viewBox="0 0 52 12"><path class="wf" d="M2 7h10v3H2z"/><path class="w w15" d="M24.500 4V1.500h7v7H29M22 4h7v7h-7z"/><path class="w w2" d="M43 2l8 8M51 2l-8 8"/></svg>
        </div>
        <svg class="crosshair" viewBox="0 0 193 193"><path class="ch" d="M96.500 0v193M0 96.500h193M91.500 91.500h10v10h-10z"/></svg>
        <svg class="ucs" viewBox="0 0 80 76"><path class="ax" d="M10.500 62V22M7 30l3.500-12L14 30M15 66.500h38M46 63l12 3.500L46 70M6.500 62.500h8v8h-8z"/><text x="6" y="12">Y</text><text x="65" y="71">X</text></svg>
        <div class="command">
          <p><span>Specify opposite corner or [Fence/WPolygon/CPolygon]:</span></p>
          <p><span>Command:</span></p>
          <p><span>Specify opposite corner or [Fence/WPolygon/CPolygon]:</span></p>
          <div class="cmdline">
            <svg viewBox="0 0 18 18"><circle class="cg" cx="9" cy="9" r="4.500"/><path class="cg" d="M9 1.500v3M9 13.500v3M1.500 9h3M13.500 9h3M4 4l2 2M12 12l2 2M14 4l-2 2M6 12l-2 2"/></svg>
            <svg viewBox="0 0 18 18"><path class="ct" d="M2.500 3.500h13v12h-13zM2.500 6.500h13M5 8l2 2-2 2M8 12.500h5"/></svg>
            <input type="text" aria-label="Command">
            <svg viewBox="0 0 18 18"><path class="ca" d="M1 13l8-8 8 8"/></svg>
          </div>
        </div>
      </section>
    </main>

    <footer class="status">
      <button class="tool burger" title="Layouts"><svg><use href="#burger"/></svg></button>
      <button class="sheet active">Model</button>
      <button class="sheet">Layout1</button>
      <svg><use href="#slash"/></svg>
      <button class="sheet">Layout2</button>
      <svg><use href="#slash"/></svg>
      <button class="add" title="New layout"><svg><use href="#plus"/></svg></button>
      <svg><use href="#slash"/></svg>
      <div class="toggles">
        <button title="Ortho"><svg><use href="#s-ortho"/></svg></button>
        <button class="on" title="Polar"><svg><use href="#s-polar"/></svg></button>
        <button class="on" title="Object Snap"><svg><use href="#s-snap"/></svg></button>
        <button class="on" title="Snap Tracking"><svg><use href="#s-otrack"/></svg></button>
        <button title="Dynamic UCS"><svg><use href="#s-ucs"/></svg></button>
        <button class="on" title="Dynamic Input"><svg><use href="#s-dyn"/></svg></button>
        <button title="Lineweight"><svg><use href="#s-lwt"/></svg></button>
        <button class="on" title="Transparency"><svg><use href="#s-transp"/></svg></button>
        <button title="Cycling"><svg><use href="#s-cycle"/></svg></button>
        <button title="Annotation"><svg><use href="#s-anno"/></svg></button>
        <button title="Units"><svg><use href="#s-units"/></svg></button>
        <button class="units">Millimeters<i class="tri"></i></button>
        <button title="Workspace"><svg><use href="#s-ws"/></svg></button>
        <button title="Isolate"><svg><use href="#s-iso"/></svg></button>
        <button title="Settings"><svg><use href="#gear"/></svg></button>
        <button title="Hardware"><svg><use href="#s-hw"/></svg></button>
        <button title="Full Screen"><svg><use href="#s-full"/></svg></button>
        <button title="Customize"><svg><use href="#s-menu"/></svg></button>
        <svg class="resize" viewBox="0 0 14 14"><path class="s" d="M2 14L14 2M6 14l8-8M10 14l4-4"/></svg>
      </div>
    </footer>
  </div>
</body>
</html>
```
FILE: styles.css
```css
* {
  box-sizing: border-box;
}

body {
  margin: 0;
  height: 100vh;
  padding: 1px 2px 2px;
  background: #000;
  color: #f0f2f0;
  font-family: "Noto Sans", sans-serif;
  font-size: 12px;
}

button, select, input {
  font: inherit;
  color: inherit;
  background: none;
  border: 0;
  padding: 0;
  margin: 0;
}

select {
  appearance: none;
  outline: none;
}

svg {
  display: block;
  flex: none;
  width: 18px;
  height: 18px;
}

.sprite {
  position: absolute;
  width: 0;
  height: 0;
}

/* icon colours: strokes */
.w, .b, .y, .o, .r, .g, .s, .lg, .lg2 { fill: none; stroke-width: 1; }
.w { stroke: #f4f4ee; }
.b { stroke: #58b4fa; }
.y { stroke: #f6bd3c; }
.o { stroke: #d99a50; }
.r { stroke: #b0603f; }
.g { stroke: #7d8288; }
.s { stroke: #c4ccd8; }
.lg { stroke: #2f66b0; stroke-width: 2; }
.lg2 { stroke: #4d8fd0; stroke-width: 2; }
.w15 { stroke-width: 1.5; }
.w2 { stroke-width: 2; }
.dim { stroke: #66717f; }
.dash { stroke-dasharray: 2 1; }
.dash2 { stroke-dasharray: 4 1; }

/* icon colours: fills */
.wf { fill: #f8f8f4; }
.bf { fill: #58b4fa; }
.lbf { fill: #addafa; }
.yf { fill: #f6bd3c; }
.of { fill: #f6bc80; }
.rf { fill: #b0603f; }
.sf { fill: #c8cedc; }
.gf { fill: #6e7276; }
.gf2 { fill: #b8b8b8; }
.df { fill: #323a44; }
.lgf { fill: #2f66b0; }
.olive { fill: #889884; }
.lens { fill: #323a44; stroke: #f8f8f4; stroke-width: 1.5; }

.window {
  height: 100%;
  display: flex;
  flex-direction: column;
  background: #323a44;
  border-radius: 8px;
  overflow: hidden;
}

.tool {
  display: flex;
  flex: none;
  align-items: center;
  justify-content: center;
  width: 24px;
  height: 24px;
}

.tri, .drop::after, .workspace::after, .dimstyle::after {
  content: "";
  flex: none;
  width: 8px;
  height: 4px;
  background: #f8f8f4;
  clip-path: polygon(0 0, 100% 0, 50% 100%);
}

.drop {
  display: flex;
  flex: none;
  align-items: center;
  justify-content: center;
  width: 12px;
  height: 24px;
}

.drop::after {
  width: 6px;
}

/* title bar */
.titlebar {
  display: flex;
  flex: none;
  align-items: center;
  height: 31px;
  padding: 7px 0 0 8px;
}

.titlebar .drop {
  width: 8px;
}

.off {
  opacity: .4;
}

.logo {
  width: 24px;
  height: 24px;
  margin-right: 5px;
}

.help {
  width: 14px;
  height: 14px;
  margin-left: 3px;
  border-radius: 7px;
  background: #58b4fa;
  color: #fff;
  font-weight: bold;
  line-height: 14px;
}

.workspace {
  display: flex;
  align-items: center;
  gap: 1px;
  width: 180px;
  height: 21px;
  margin-left: 2px;
  padding: 0 5px 0 1px;
  border: 1px solid #1f252d;
  background: #373f49;
}

.workspace select {
  flex: 1;
  min-width: 0;
}

.workspace::after {
  width: 6px;
}

.tool.narrow {
  width: 16px;
}

.titlebar h1 {
  margin: 0 0 0 10px;
  font-size: 12px;
  font-weight: normal;
}

.winctl {
  display: flex;
  gap: 2px;
  margin: 0 0 6px auto;
}

/* menus and ribbon tabs */
.menubar {
  display: flex;
  flex: none;
  gap: 2px;
  height: 22px;
  padding-bottom: 2px;
  background: #313a43;
}

.menubar button {
  padding: 0 7px 0 6px;
  white-space: nowrap;
}

.tabs {
  display: flex;
  flex: none;
  gap: 5px;
  height: 20px;
  padding: 0 6px;
}

.tabs > button {
  padding: 6px 8px 0;
  line-height: 14px;
  white-space: nowrap;
}

.tabs .active {
  background: #48586e;
  color: #58b4fa;
}

.tabs-end {
  display: flex;
  align-items: center;
}

.chev {
  width: 10px;
  height: 8px;
}

.upbox {
  width: 14px;
  height: 14px;
  margin: 0 2px 0 10px;
}

.tabs-end .drop::after {
  width: 8px;
}

/* ribbon */
.ribbon {
  display: flex;
  flex: none;
  height: 100px;
  margin: 0 1px;
  padding-bottom: 2px;
  background: #48586e;
}

.panel {
  display: flex;
  flex: none;
  flex-direction: column;
  border-right: 1px solid #2b323b;
}

.panel-body {
  display: grid;
  align-content: start;
  height: 80px;
}

.draw {
  grid-template-columns: 48px 52px 52px 36px 40px 41px;
  padding-right: 6px;
}

.modify {
  grid-template-columns: 46px 46px 45px 44px 27px 41px 29px;
  padding-right: 5px;
}

.big {
  display: flex;
  flex-direction: column;
  align-items: center;
  padding-top: 6px;
  line-height: 22px;
}

.big svg, .folded svg {
  width: 36px;
  height: 36px;
}

.smalls {
  display: grid;
  grid-template-columns: 24px 12px;
  align-content: start;
  justify-content: end;
  padding-top: 5px;
}

.smalls.single {
  grid-template-columns: 24px;
}

.panel-title {
  display: flex;
  align-items: center;
  justify-content: center;
  gap: 8px;
  height: 20px;
}

.folded {
  display: flex;
  flex: none;
  flex-direction: column;
  align-items: center;
  width: 60px;
  margin-left: 1px;
  padding: 2px 0 4px;
  border: 1px solid #566170;
  background: #373f4c;
  line-height: 22px;
}

.folded .tri {
  margin-top: auto;
}

/* drawing tabs */
.filetabs {
  display: flex;
  flex: none;
  align-items: center;
  height: 29px;
  padding: 0 0 1px 13px;
}

.burger {
  margin-right: 14px;
}

.filetab {
  display: flex;
  align-items: center;
  height: 22px;
  padding: 2px 10px 0 16px;
  background: #4a6084;
  clip-path: polygon(9px 0, 100% 0, calc(100% - 9px) 100%, 0 100%);
  font-weight: bold;
}

.x {
  margin-left: 11px;
}

.x svg {
  width: 8px;
  height: 8px;
  opacity: .7;
}

.filetab + .tool {
  margin-left: 5px;
}

/* dimension toolbar */
.dimbar {
  display: flex;
  flex: none;
  align-self: flex-start;
  height: 27px;
  margin-bottom: 2px;
  padding-right: 2px;
  border-top: 1px solid #98a6b8;
  background: #464e5a;
}

.grip {
  width: 6px;
  margin: 2px 1px;
  border: solid #9fb0c8;
  border-width: 0 2px;
}

.sep {
  width: 4px;
  margin: 4px 2px 3px 3px;
  border: solid #8796aa;
  border-width: 0 1px;
}

.dimstyle {
  display: flex;
  align-items: center;
  width: 101px;
  height: 22px;
  margin-top: 1px;
  padding: 0 4px;
  background: #20262f;
  border-bottom: 1px solid #98a6b8;
  font-family: Roboto, sans-serif;
}

.dimstyle select {
  flex: 1;
}

/* palettes */
.work {
  display: flex;
  flex: 1;
  align-items: flex-start;
  min-height: 0;
  overflow: hidden;
}

.palette {
  flex: none;
  width: 28px;
  padding-top: 1px;
  border-left: 1px solid #8796aa;
  background: #464e5a;
}

.palette::before {
  content: "";
  display: block;
  height: 2px;
  margin-bottom: 1px;
  border: solid #9fb0c8;
  border-width: 2px 0;
}

.palette.short {
  padding-bottom: 3px;
}

.palette .tool {
  align-items: flex-start;
  justify-content: flex-start;
  width: 27px;
  height: 23px;
  padding: 2px 0 0 3px;
}

/* drawing area */
.viewport {
  position: relative;
  display: flex;
  flex: 1;
  flex-direction: column;
  justify-content: space-between;
  align-self: stretch;
  margin-left: 2px;
  background: #212830;
}

.view-head {
  display: flex;
  justify-content: space-between;
  padding: 5px 10px 0 5px;
  font-family: Roboto, sans-serif;
  font-size: 11px;
}

.view-ctl {
  width: 52px;
  height: 12px;
  margin-top: 3px;
}

.crosshair {
  position: absolute;
  left: 553px;
  top: 144px;
  width: 193px;
  height: 193px;
}

.ch, .ax {
  fill: none;
  stroke: #d0d4d6;
}

.ucs {
  position: absolute;
  left: 3px;
  bottom: 3px;
  width: 80px;
  height: 76px;
  fill: #e4e6e6;
}

.command {
  width: 60%;
  margin-left: 174px;
}

.command p {
  height: 17px;
  margin: 0 0 6px 33px;
  color: #b6bcc4;
  font-family: "DejaVu Sans Mono", monospace;
  font-size: 13px;
  line-height: 17px;
}

.command span {
  display: inline-block;
  padding: 0 12px 0 2px;
  background: #343b45;
}

.cmdline {
  display: flex;
  align-items: center;
  gap: 10px;
  height: 24px;
  padding: 0 8px 0 10px;
  background: #343b45;
  border-radius: 4px;
}

.cmdline input {
  flex: 1;
  height: 16px;
  margin-left: -6px;
  border-left: 1px solid #69717c;
}

.cg, .ct, .ca {
  fill: none;
  stroke: #8d9197;
  stroke-width: 3;
}

.ct {
  stroke-width: 1;
}

.ca {
  stroke-width: 2;
}

/* status bar */
.status {
  display: flex;
  flex: none;
  align-items: center;
  height: 27px;
  padding-left: 10px;
}

.status .burger svg {
  width: 16px;
}

.status > svg, .add svg {
  width: 14px;
  height: 14px;
}

.sheet {
  height: 22px;
  padding: 0 10px;
  font-size: 11px;
}

.sheet.active {
  padding: 0 20px;
  background: #4a6084;
  clip-path: polygon(9px 0, 100% 0, calc(100% - 9px) 100%, 0 100%);
  font-size: 12px;
  font-weight: bold;
}

.toggles {
  display: flex;
  align-items: center;
  gap: 2px;
  margin-left: auto;
}

.toggles button {
  display: flex;
  align-items: center;
  justify-content: center;
  width: 20px;
  height: 21px;
}

.toggles .on {
  border: 1px solid #58b4fa;
  background: #4a6280;
}

.toggles .units {
  justify-content: flex-start;
  gap: 5px;
  width: 85px;
  color: #98a0ac;
  font-family: "DejaVu Sans Mono", monospace;
  font-size: 10px;
}

.resize {
  width: 14px;
  height: 14px;
  margin-left: 3px;
  align-self: flex-end;
}
```
